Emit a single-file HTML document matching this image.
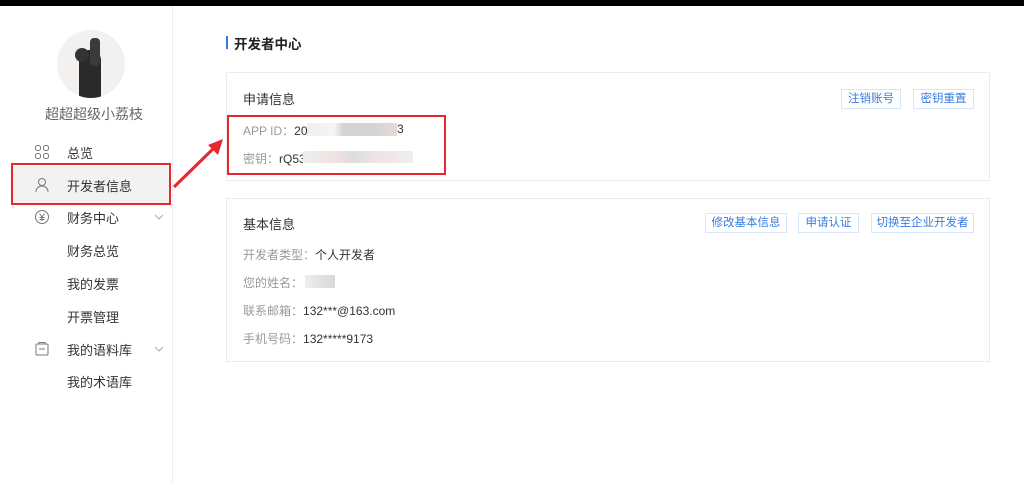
<!DOCTYPE html><html><head><meta charset="utf-8"><style>
body{margin:0;width:1024px;height:484px;background:#fff;font-family:"Liberation Sans","Noto Sans CJK SC",sans-serif;position:relative;overflow:hidden;font-size:12px;color:#333}
.a{position:absolute;white-space:nowrap}
.g{color:#999}
.btn{position:absolute;height:18px;border:1px solid #d6e6fb;color:#3a7de0;font-size:11.5px;line-height:18px;text-align:center}
.blur{position:absolute;background:#e2e2e2}
</style></head><body>
<div class="a" style="left:0;top:0;width:1024px;height:6px;background:#000"></div>
<div class="a" style="left:172px;top:6px;width:1px;height:478px;background:#eee"></div>
<div class="a" style="left:57px;top:30px;width:68px;height:68px;border-radius:50%;background:#f3f1ef;overflow:hidden">
<div class="a" style="left:22px;top:20px;width:22px;height:48px;background:#2a2a2a;border-radius:10px 10px 0 0"></div>
<div class="a" style="left:18px;top:18px;width:14px;height:14px;background:#333;border-radius:50%"></div>
<div class="a" style="left:33px;top:8px;width:10px;height:28px;background:#3a3a3a;border-radius:4px"></div></div>
<div class="a" style="left:45px;top:104px;font-size:14px;color:#666">超超超级小荔枝</div>
<div class="a" style="left:12px;top:166px;width:158px;height:38px;background:#f2f2f2"></div>
<svg class="a" style="left:34px;top:144px" width="16" height="16" fill="none" stroke="#777"><rect x="1.5" y="1.5" width="5" height="5" rx="2"/><rect x="9.5" y="1.5" width="5" height="5" rx="2"/><rect x="1.5" y="9.5" width="5" height="5" rx="2"/><rect x="9.5" y="9.5" width="5" height="5" rx="2"/></svg>
<svg class="a" style="left:34px;top:177px" width="16" height="16" fill="none" stroke="#777"><circle cx="8" cy="5" r="3.5"/><path d="M2 15c0-4 3-6 6-6s6 2 6 6"/></svg>
<svg class="a" style="left:34px;top:209px" width="16" height="16" fill="none" stroke="#777"><circle cx="8" cy="8" r="6.5"/><path d="M5.5 4.5L8 8l2.5-3.5M8 8v4M5.5 8.5h5M5.5 10.5h5"/></svg>
<svg class="a" style="left:34px;top:341px" width="16" height="16" fill="none" stroke="#777"><rect x="2" y="3" width="12" height="11" rx="1"/><path d="M5 3V1.5h6V3M5 8h6"/></svg>
<div class="a" style="left:67px;top:143px;font-size:13px">总览</div>
<div class="a" style="left:67px;top:176px;font-size:13px">开发者信息</div>
<div class="a" style="left:67px;top:208px;font-size:13px">财务中心</div>
<div class="a" style="left:67px;top:241px;font-size:13px">财务总览</div>
<div class="a" style="left:67px;top:274px;font-size:13px">我的发票</div>
<div class="a" style="left:67px;top:307px;font-size:13px">开票管理</div>
<div class="a" style="left:67px;top:340px;font-size:13px">我的语料库</div>
<div class="a" style="left:67px;top:372px;font-size:13px">我的术语库</div>
<svg class="a" style="left:154px;top:214px" width="10" height="6" fill="none" stroke="#aaa"><path d="M1 1l4 4 4-4"/></svg>
<svg class="a" style="left:154px;top:346px" width="10" height="6" fill="none" stroke="#aaa"><path d="M1 1l4 4 4-4"/></svg>
<div class="a" style="left:226px;top:36px;width:2px;height:13px;background:#2f7de1"></div>
<div class="a" style="left:234px;top:33px;font-size:13.5px;font-weight:bold;color:#222">开发者中心</div>
<div class="a" style="left:226px;top:72px;width:762px;height:107px;border:1px solid #ececec"></div>
<div class="a" style="left:226px;top:198px;width:762px;height:162px;border:1px solid #ececec"></div>
<div class="a" style="left:243px;top:89px;font-size:13px">申请信息</div>
<div class="a" style="left:243px;top:122px"><span class="g">APP ID：</span>20</div>
<div class="blur" style="left:307px;top:123px;width:90px;height:13px;background:linear-gradient(90deg,#eee,#f5f5f5 30%,#d4d4d4 40%,#d4d4d4 75%,#ead8d8)"></div>
<div class="a" style="left:397px;top:122px">3</div>
<div class="a" style="left:243px;top:150px"><span class="g">密钥：</span>rQ53</div>
<div class="blur" style="left:303px;top:151px;width:110px;height:12px;background:linear-gradient(90deg,#eee,#f2e2e2 30%,#ddd 45%,#f2e4e4 70%,#eee)"></div>
<div class="btn" style="left:841px;top:89px;width:58px">注销账号</div>
<div class="btn" style="left:913px;top:89px;width:59px">密钥重置</div>
<div class="a" style="left:243px;top:214px;font-size:13px">基本信息</div>
<div class="btn" style="left:705px;top:213px;width:80px">修改基本信息</div>
<div class="btn" style="left:798px;top:213px;width:59px">申请认证</div>
<div class="btn" style="left:871px;top:213px;width:101px">切换至企业开发者</div>
<div class="a" style="left:243px;top:246px"><span class="g">开发者类型：</span>个人开发者</div>
<div class="a" style="left:243px;top:274px"><span class="g">您的姓名：</span></div>
<div class="blur" style="left:305px;top:275px;width:30px;height:13px;background:linear-gradient(90deg,#eee,#d8d8d8)"></div>
<div class="a" style="left:243px;top:302px"><span class="g">联系邮箱：</span>132***@163.com</div>
<div class="a" style="left:243px;top:330px"><span class="g">手机号码：</span>132*****9173</div>
<div class="a" style="left:11px;top:163px;width:156px;height:38px;border:2px solid #e8262d"></div>
<div class="a" style="left:227px;top:115px;width:215px;height:56px;border:2px solid #e8262d"></div>
<svg class="a" style="left:0;top:0" width="300" height="300"><path d="M174 187L216 146" stroke="#e8262d" stroke-width="3"/><path d="M223 139L208 145L218 155Z" fill="#e8262d"/></svg>
</body></html>
